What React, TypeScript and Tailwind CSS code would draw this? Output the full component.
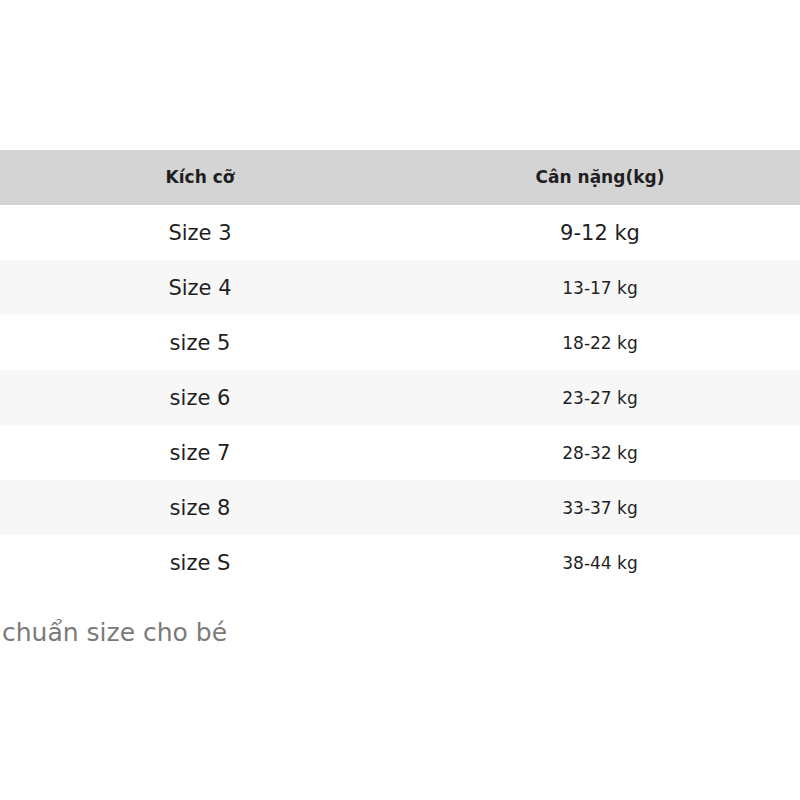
import React from 'react';

const rows = [
  { size: 'Size 3', weight: '9-12 kg', big: true },
  { size: 'Size 4', weight: '13-17 kg' },
  { size: 'size 5', weight: '18-22 kg' },
  { size: 'size 6', weight: '23-27 kg' },
  { size: 'size 7', weight: '28-32 kg' },
  { size: 'size 8', weight: '33-37 kg' },
  { size: 'size S', weight: '38-44 kg' },
];

export default function App() {
  return (
    <div className="w-[800px] h-[800px] bg-white overflow-hidden text-[#1f1f1f] font-['DejaVu_Sans',sans-serif]">
      <div className="pt-[150px]">
        <div className="grid grid-cols-2 h-[55px] bg-[#d4d4d4] items-center text-center font-bold text-[17px]">
          <div>Kích cỡ</div>
          <div>Cân nặng(kg)</div>
        </div>
        {rows.map((r, i) => (
          <div
            key={r.size}
            className={`grid grid-cols-2 h-[55px] pt-[3px] items-center text-center ${i % 2 === 1 ? 'bg-[#f7f7f7]' : 'bg-white'}`}
          >
            <div className="text-[21px]">{r.size}</div>
            <div className={r.big ? 'text-[21px]' : 'text-[17px]'}>{r.weight}</div>
          </div>
        ))}
        <div className="mt-[26px] pl-[2px] text-[25px] text-[#7a7a7a] leading-[34px]">chuẩn size cho bé</div>
      </div>
    </div>
  );
}
